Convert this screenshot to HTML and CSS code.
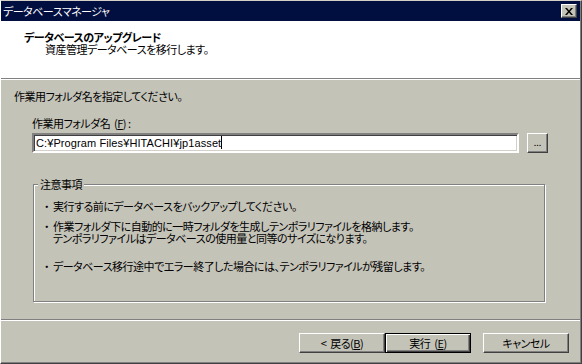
FILE: index.html
```html
<!DOCTYPE html>
<html lang="ja">
<head>
    <meta charset="UTF-8">
    <title>データベースマネージャ</title>
    <link rel="stylesheet" href="styles.css">
</head>
<body>
    <div class="window">
        <div class="titlebar">
            <span class="title">データベースマネージャ</span>
            <button class="close-btn" title="閉じる">
                <svg width="8" height="7" viewBox="0 0 8 7">
                    <path d="M0 0h2l2 2.5 2-2.5h2l-3 3.5 3 3.5h-2l-2-2.5-2 2.5h-2l3-3.5z" fill="#000"/>
                </svg>
            </button>
        </div>

        <div class="header">
            <div class="header-title">データベースのアップグレード</div>
            <div class="header-sub">資産管理データベースを移行します。</div>
        </div>
        <div class="etched"></div>

        <div class="content">
            <p class="intro">作業用フォルダ名を指定してください。</p>
            <label class="field-label" for="folder">作業用フォルダ名&nbsp;&nbsp;(<u>F</u>)&nbsp;:</label>
            <div class="field-row">
                <div class="textbox" id="folder">C:¥Program Files¥HITACHI¥jp1asset<span class="caret"></span></div>
                <button class="btn browse-btn">...</button>
            </div>

            <fieldset class="group">
                <legend>注意事項</legend>
                <ul class="notes">
                    <li>実行する前にデータベースをバックアップしてください。</li>
                    <li>作業フォルダ下に自動的に一時フォルダを生成しテンポラリファイルを格納します。<br>テンポラリファイルはデータベースの使用量と同等のサイズになります。</li>
                    <li class="last">データベース移行途中でエラー終了した場合には、テンポラリファイルが残留します。</li>
                </ul>
            </fieldset>
        </div>

        <div class="footer">
            <div class="etched"></div>
            <div class="buttons">
                <button class="btn">&lt;&nbsp;&nbsp;戻る(<u>B</u>)</button>
                <button class="btn default">実行&nbsp;&nbsp;(<u>E</u>)</button>
                <button class="btn cancel">キャンセル</button>
            </div>
        </div>
    </div>
</body>
</html>
```

FILE: styles.css
```css
body {
    margin: 0;
    padding: 0;
    font-family: "Noto Sans CJK JP", sans-serif;
    font-size: 11px;
    letter-spacing: -0.5px;
    font-feature-settings: "palt";
    color: #000;
    background-color: #c4c3b8;
}
.window {
    width: 582px;
    height: 364px;
    box-sizing: border-box;
    display: flex;
    flex-direction: column;
    background-color: #c4c3b8;
    border-top: 1px solid #d4d0c8;
    border-left: 1px solid #ffffff;
    border-right: 1px solid #404040;
    border-bottom: 1px solid #404040;
    box-shadow: inset -1px -1px 0 #808080;
}
.titlebar {
    height: 20px;
    display: flex;
    align-items: center;
    justify-content: space-between;
    background-color: #010f40;
    color: #fff;
    padding: 0 3px 0 2px;
    margin-right: 1px;
}
.title {
    line-height: 12px;
}
.close-btn {
    width: 16px;
    height: 14px;
    padding: 0;
    display: flex;
    align-items: center;
    justify-content: center;
    background-color: #c4c3b8;
    border: 1px solid;
    border-color: #fff #404040 #404040 #fff;
    box-shadow: inset -1px -1px 0 #808080;
}
.header {
    height: 57px;
    background-color: #fff;
    margin-right: 1px;
    padding-top: 10px;
    box-sizing: border-box;
}
.header-title {
    font-weight: bold;
    line-height: 12px;
    padding-left: 23px;
}
.header-sub {
    line-height: 12px;
    padding-left: 44px;
}
.etched {
    height: 1px;
    background-color: #808080;
    border-bottom: 1px solid #fff;
    margin-right: 1px;
}
.content {
    padding: 10px 0 0 13px;
}
.intro {
    margin: 0;
    line-height: 12px;
}
.field-label {
    display: block;
    margin: 15px 0 0 18px;
    line-height: 12px;
}
.field-row {
    display: flex;
    gap: 8px;
    margin: 4px 0 0 18px;
}
.textbox {
    width: 487px;
    height: 20px;
    box-sizing: border-box;
    background-color: #fff;
    border: 2px solid;
    border-color: #808080 #fff #fff #808080;
    box-shadow: inset 1px 1px 0 #404040, inset -1px -1px 0 #d4d0c8;
    padding: 0 2px;
    font-family: "Liberation Sans", "Noto Sans CJK JP", sans-serif;
    font-size: 11px;
    letter-spacing: 0.1px;
    line-height: 16px;
}
.caret {
    display: inline-block;
    width: 1px;
    height: 13px;
    background-color: #000;
    vertical-align: -2px;
}
.btn {
    font-family: "Noto Sans CJK JP", sans-serif;
    font-size: 11px;
    letter-spacing: -0.5px;
    font-feature-settings: "palt";
    background-color: #c4c3b8;
    color: #000;
    border: 1px solid;
    border-color: #fff #404040 #404040 #fff;
    box-shadow: inset -1px -1px 0 #808080;
    padding: 0;
    height: 20px;
    line-height: 16px;
}
.btn u {
    text-decoration-thickness: 1px;
}
.browse-btn {
    width: 21px;
    font-size: 9px;
    letter-spacing: 0;
    line-height: 12px;
}
.group {
    width: 512px;
    box-sizing: border-box;
    margin: 25px 0 0 19px;
    padding: 0 0 0 12px;
    height: 124px;
    border: 1px solid #808080;
    box-shadow: inset 1px 1px 0 #fff, 1px 1px 0 #fff;
}
.group legend {
    padding: 0 2px;
    margin-left: -8px;
    line-height: 12px;
    background-color: #c4c3b8;
}
.notes {
    list-style: none;
    margin: 10px 0 0 0;
    padding: 0;
}
.notes li {
    line-height: 12px;
    margin-bottom: 8px;
    padding-left: 7px;
    text-indent: -7px;
}
.notes li::before {
    content: "・";
    display: inline-block;
    width: 9px;
    text-indent: 0;
    margin-left: -2px;
}
.notes li + li.last {
    margin-top: 16px;
}
.footer {
    margin-top: auto;
    padding-bottom: 10px;
}
.buttons {
    display: flex;
    justify-content: flex-end;
    margin: 12px 12px 0 0;
}
.buttons .btn {
    width: 86px;
}
.buttons .default {
    border: 1px solid #000;
    box-shadow: inset 1px 1px 0 #fff, inset -1px -1px 0 #404040, inset -2px -2px 0 #808080;
    margin-right: 12px;
}
```
